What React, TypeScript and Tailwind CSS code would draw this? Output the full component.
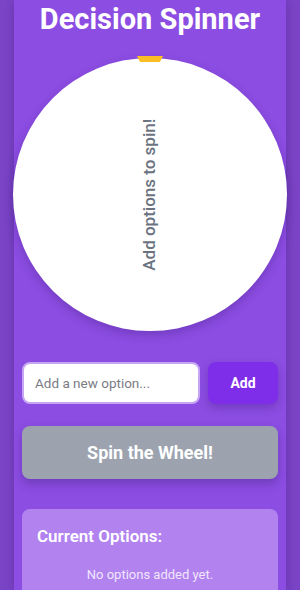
import { useState } from 'react'

export default function App() {
  const [options, setOptions] = useState<string[]>([])
  const [value, setValue] = useState('')

  function add() {
    const v = value.trim()
    if (!v) return
    setOptions((xs) => [...xs, v])
    setValue('')
  }

  return (
    <div className="min-h-[590px] w-[300px] bg-[#7c45c8] overflow-hidden" style={{ fontFamily: 'Roboto, "Noto Sans", sans-serif' }}>
      <div className="mx-[14px] min-h-[590px] bg-[#8c4de2] shadow-[0_0_12px_rgba(60,20,120,0.35)]">
        <h1 className="pt-[2px] text-center text-[29px] font-bold leading-[35px] text-white">Decision Spinner</h1>
        <div className="relative mt-[21px] flex justify-center">
          <div className="absolute left-1/2 top-[-2px] z-10 h-[6px] w-[26px] -translate-x-1/2 bg-[#fbbf24] [clip-path:polygon(0_0,100%_0,88%_100%,12%_100%)]" />
          <div className="flex h-[273px] w-[274px] shrink-0 items-center justify-center rounded-full bg-white shadow-[0_4px_10px_rgba(40,10,90,0.25)]">
            <span className="-rotate-90 whitespace-nowrap text-[17px] font-medium text-[#6b7280]">Add options to spin!</span>
          </div>
        </div>
        <div className="mt-[31px] flex gap-[8px] px-[8px]">
          <input
            value={value}
            onChange={(e) => setValue(e.target.value)}
            placeholder="Add a new option..."
            className="h-[42px] w-[178px] rounded-lg border-2 border-[#c6a6f3] bg-white px-[11px] text-[13.5px] text-gray-800 outline-none placeholder:text-[#7b7b84]"
          />
          <button onClick={add} className="h-[42px] flex-1 rounded-lg bg-[#7e2de9] text-[14px] font-bold text-white shadow-[0_4px_8px_rgba(60,20,120,0.3)]">Add</button>
        </div>
        <div className="mt-[22px] px-[8px]">
          <button className="h-[53px] w-full rounded-lg bg-[#9ca3af] text-[18px] font-bold text-white shadow-[0_5px_10px_rgba(50,20,100,0.3)]">Spin the Wheel!</button>
        </div>
        <div className="mt-[30px] px-[8px]">
          <div className="rounded-lg bg-[#b283ef] px-[15px] pb-[14px] pt-[15px]">
            <h2 className="text-[17px] font-semibold text-white">Current Options:</h2>
            {options.length === 0 ? (
              <p className="mt-[15px] text-center text-[13px] text-[#f0e6fd]">No options added yet.</p>
            ) : (
              <ul className="mt-2 space-y-1 text-[13px] text-white">
                {options.map((o, i) => <li key={i}>{o}</li>)}
              </ul>
            )}
          </div>
        </div>
      </div>
    </div>
  )
}
